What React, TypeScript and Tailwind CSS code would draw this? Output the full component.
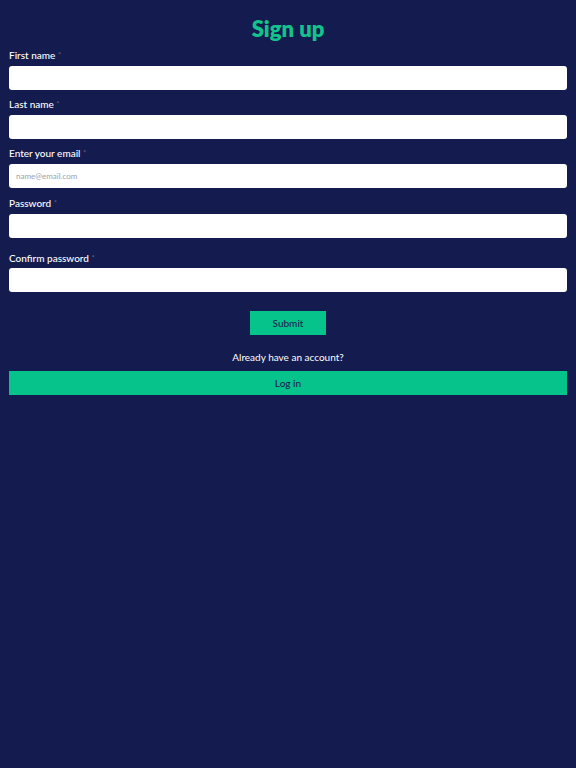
import React from "react";

const Field = ({ label, placeholder, type = "text", gap = "mt-[3px]", labelMt = "mt-[8px]" }: { label: string; placeholder?: string; type?: string; gap?: string; labelMt?: string }) => (
  <div className={`flex flex-col ${labelMt}`}>
    <label className="text-[10px] leading-[14px] text-white font-medium h-[14px]">
      {label} <span className="text-[#5a6183] text-[8px] align-top">*</span>
    </label>
    <input
      type={type}
      placeholder={placeholder}
      className={`${gap} h-[24px] w-full rounded-[3px] bg-white px-[7px] text-[8px] text-[#333] placeholder:text-[#a0a0a8] outline-none`}
    />
  </div>
);

export default function App() {
  return (
    <div className="min-h-[768px] w-full bg-[#141b4e] px-[9px]" style={{ fontFamily: "Lato, 'Open Sans', sans-serif" }}>
      <h1 className="pt-[14px] text-center text-[22px] leading-[30px] font-extrabold text-[#13c38c]" style={{ fontFamily: "Lato, sans-serif" }}>
        Sign up
      </h1>
      <Field label="First name" labelMt="mt-[4px]" gap="mt-[4px]" />
      <Field label="Last name" labelMt="mt-[7px]" gap="mt-[4px]" />
      <Field label="Enter your email" placeholder="name@email.com" labelMt="mt-[7px]" gap="mt-[4px]" />
      <Field label="Password" labelMt="mt-[8px]" gap="mt-[4px]" />
      <Field label="Confirm password" labelMt="mt-[13px]" gap="mt-[3px]" />
      <div className="mt-[19px] flex justify-center">
        <button className="h-[24px] w-[76px] bg-[#06c38b] text-[10px] font-medium text-[#1a2552]">Submit</button>
      </div>
      <p className="mt-[15px] text-center text-[10px] leading-[14px] text-white">Already have an account?</p>
      <button className="mt-[7px] h-[24px] w-full bg-[#06c38b] text-[10px] font-medium text-[#1a2552]">Log in</button>
    </div>
  );
}
